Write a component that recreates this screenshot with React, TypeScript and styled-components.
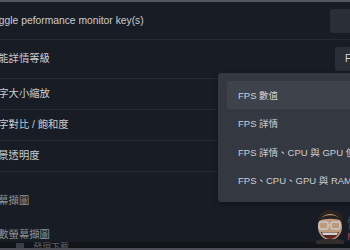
import styled, { createGlobalStyle } from "styled-components";

const GlobalStyle = createGlobalStyle`
  html, body {
    margin: 0;
    padding: 0;
    background: #181c24;
    overflow: hidden;
  }
  body {
    width: 350px;
    height: 250px;
    font-family: "Liberation Sans", "Noto Sans CJK TC", sans-serif;
  }
`;

type Row = {
  label: string;
  height: number;
  divider: boolean;
  dim?: boolean;
  padTop?: number;
  control?: "key" | "select";
};

const rows: Row[] = [
  { label: "Toggle peformance monitor key(s)", height: 37, divider: true, control: "key" },
  { label: "效能詳情等級", height: 38, divider: true, control: "select" },
  { label: "文字大小縮放", height: 30, divider: true },
  { label: "文字對比 / 飽和度", height: 30, divider: true },
  { label: "背景透明度", height: 30, divider: true },
  { label: "螢幕擷圖", height: 21, divider: false, dim: true, padTop: 23 },
  { label: "全數螢幕擷圖", height: 11, divider: false, dim: true, padTop: 13 },
];

const options = [
  "FPS 數值",
  "FPS 詳情",
  "FPS 詳情、CPU 與 GPU 使用率",
  "FPS、CPU、GPU 與 RAM 使用率",
];

const App = () => (
  <>
    <GlobalStyle />
    <Page>
      <TopEdge />
      <Settings>
        {rows.map((row) => (
          <SettingRow
            key={row.label}
            $height={row.height}
            $divider={row.divider}
            $padTop={row.padTop}
          >
            <Label $dim={row.dim}>{row.label}</Label>
            {row.control === "key" && <KeyBox />}
            {row.control === "select" && <SelectBox>FPS 數值</SelectBox>}
          </SettingRow>
        ))}
        <Dropdown>
          {options.map((opt, i) => (
            <Option key={opt} $active={i === 0}>
              {opt}
            </Option>
          ))}
        </Dropdown>
        <Watermark>
          <Face />
          <LogoMark>
            <LogoTop>電</LogoTop>
            <LogoBottom>M</LogoBottom>
          </LogoMark>
        </Watermark>
      </Settings>
      <Footer>
        <FooterIcon />
        <FooterText>發現下載</FooterText>
      </Footer>
      <BottomEdge />
    </Page>
  </>
);

const Face = () => (
  <svg width="34" height="36" viewBox="0 0 34 36">
    <path d="M5 14 C4 5 12 1 18 2 C26 2 31 7 30 15 L28 12 C24 9 12 9 7 12 Z" fill="#2b2420" />
    <ellipse cx="17" cy="19" rx="12" ry="13" fill="#d9b08a" />
    <path d="M6 13 C9 6 24 5 29 13 C24 10 11 10 6 13 Z" fill="#2b2420" />
    <rect x="6" y="14" width="9" height="7" rx="2" fill="none" stroke="#e8e8e8" strokeWidth="1.4" />
    <rect x="18" y="14" width="9" height="7" rx="2" fill="none" stroke="#e8e8e8" strokeWidth="1.4" />
    <line x1="15" y1="17" x2="18" y2="17" stroke="#e8e8e8" strokeWidth="1.2" />
    <path d="M8 24 C10 33 24 33 26 24 Z" fill="#6b2a22" />
    <path d="M9 24.5 L25 24.5 L24 27 L10 27 Z" fill="#f2f2f2" />
    <path d="M3 33 C8 30 26 30 31 33 L31 36 L3 36 Z" fill="#3a3330" />
  </svg>
);

const Page = styled.div`
  display: flex;
  flex-direction: column;
  width: 350px;
  height: 250px;
  overflow: hidden;
`;

const TopEdge = styled.div`
  height: 2px;
  background: #53565c;
  flex-shrink: 0;
`;

const BottomEdge = styled.div`
  height: 2px;
  background: #4b4e54;
  flex-shrink: 0;
`;

const Settings = styled.div`
  position: relative;
  display: flex;
  flex-direction: column;
  height: 240px;
  margin: 0 -60px 0 -12px;
  flex-shrink: 0;
`;

const SettingRow = styled.div<{ $height: number; $divider: boolean; $padTop?: number }>`
  display: flex;
  align-items: ${(p) => (p.$padTop ? "flex-start" : "center")};
  justify-content: space-between;
  height: ${(p) => p.$height}px;
  padding-top: ${(p) => p.$padTop ?? 0}px;
  box-sizing: content-box;
  flex-shrink: 0;
  border-bottom: ${(p) => (p.$divider ? "1px solid #262a32" : "none")};
`;

const Label = styled.span<{ $dim?: boolean }>`
  font-size: 10.3px;
  line-height: 12px;
  color: ${(p) => (p.$dim ? "#8d9096" : "#c9ccd1")};
  white-space: nowrap;
`;

const KeyBox = styled.div`
  width: 80px;
  height: 24px;
  border-radius: 2px;
  background: #2a2e36;
`;

const SelectBox = styled.div`
  width: 65px;
  height: 24px;
  padding-left: 10px;
  border-radius: 2px;
  background: #2a2e36;
  color: #d6d8dc;
  font-size: 10px;
  line-height: 24px;
  white-space: nowrap;
  overflow: hidden;
`;

const Dropdown = styled.div`
  position: absolute;
  left: 230px;
  top: 71px;
  width: 200px;
  padding: 8px 0 8px 9px;
  border-radius: 3px;
  background: #343841;
  box-shadow: 0 2px 6px rgba(0, 0, 0, 0.35);
  display: flex;
  flex-direction: column;
`;

const Option = styled.div<{ $active?: boolean }>`
  height: 28.25px;
  display: flex;
  align-items: center;
  padding-left: 11px;
  border-radius: 2px 0 0 2px;
  background: ${(p) => (p.$active ? "#3e424b" : "transparent")};
  color: #ccced3;
  font-size: 9.5px;
  white-space: nowrap;
`;

const Watermark = styled.div`
  position: absolute;
  left: 325px;
  top: 206px;
  display: flex;
  align-items: flex-start;
  opacity: 0.85;
`;

const LogoMark = styled.div`
  display: flex;
  flex-direction: column;
  margin-top: 6px;
  font-family: "Noto Sans CJK TC", sans-serif;
`;

const LogoTop = styled.span`
  font-size: 14px;
  line-height: 18px;
  color: #4d5f78;
`;

const LogoBottom = styled.span`
  font-size: 9px;
  line-height: 10px;
  color: #a03a52;
  font-weight: bold;
`;

const Footer = styled.div`
  display: flex;
  align-items: flex-start;
  gap: 9px;
  height: 6px;
  padding-left: 16px;
  background: #111419;
  overflow: hidden;
  flex-shrink: 0;
`;

const FooterIcon = styled.div`
  width: 8px;
  height: 5px;
  margin-top: 1px;
  background: #3a3e45;
`;

const FooterText = styled.span`
  font-size: 9px;
  line-height: 9px;
  color: #5d6168;
  margin-top: 1px;
`;

export default App;
